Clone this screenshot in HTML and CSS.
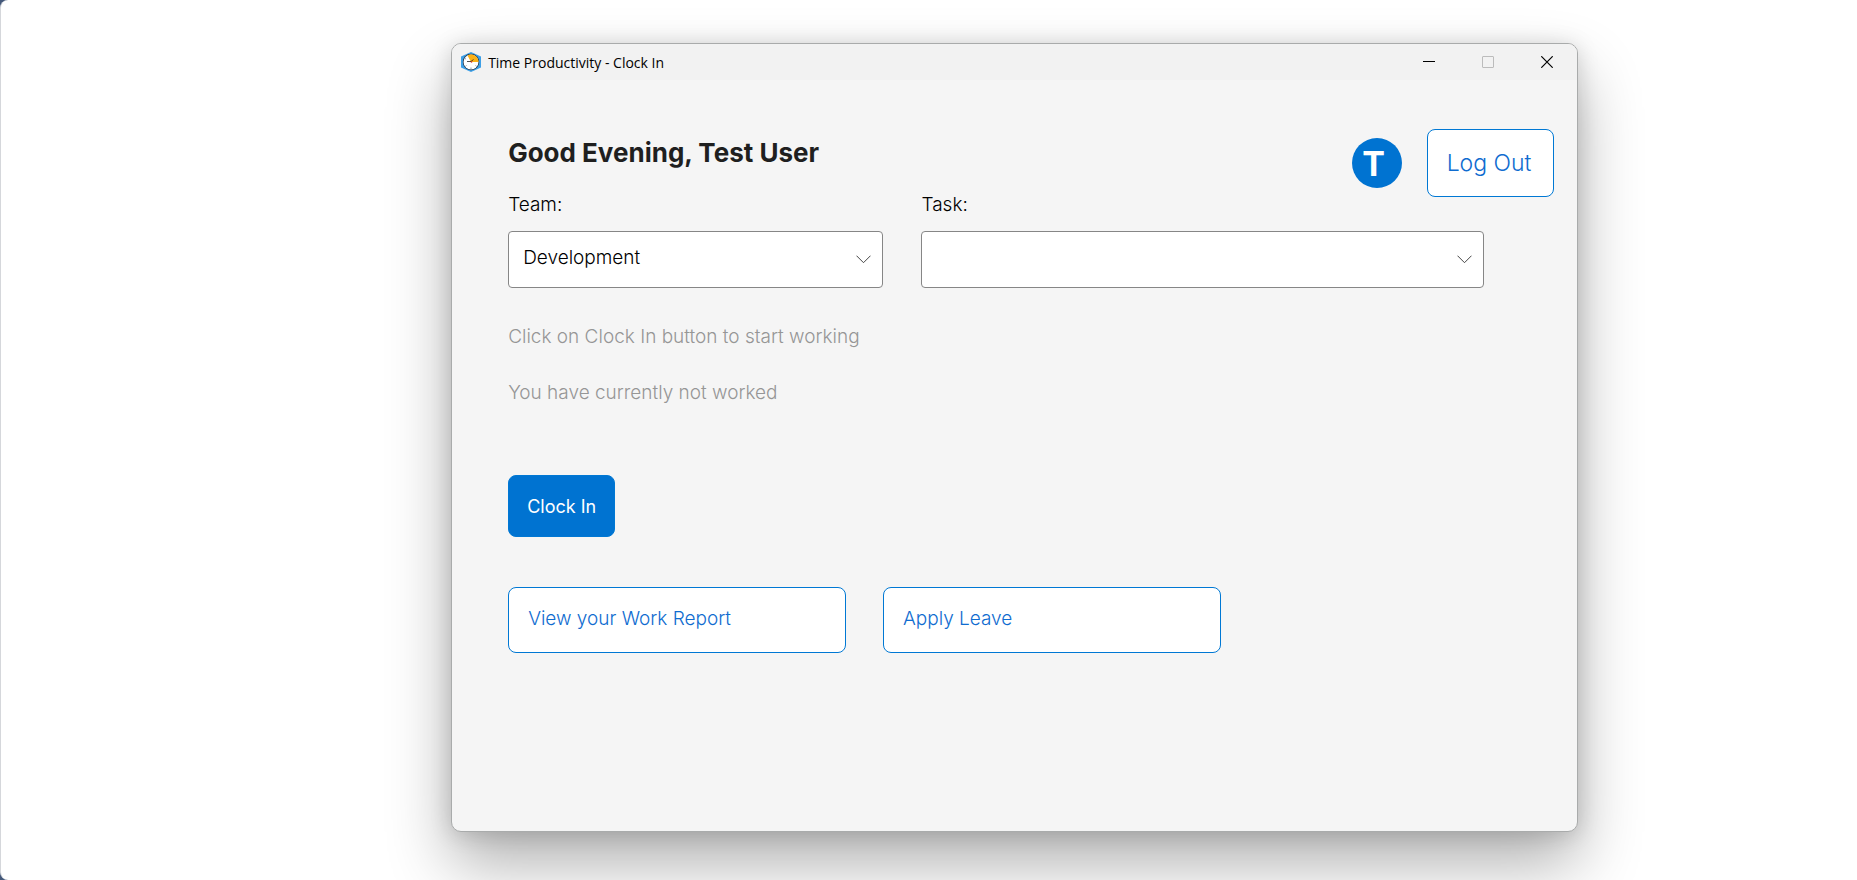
FILE: index.html
```html
<!DOCTYPE html>
<html lang="en">
<head>
<meta charset="utf-8">
<meta name="viewport" content="width=device-width, initial-scale=1">
<title>Time Productivity - Clock In</title>
<link rel="stylesheet" href="styles.css">
</head>
<body>
<div class="desktop">
  <main class="window">
    <header class="titlebar">
      <svg class="app-icon" viewBox="0 0 20 20" aria-hidden="true">
        <path fill="#3d9fe6" d="M10 0l10 4.500v11L10 20 0 15.500v-11z"/>
        <circle cx="10" cy="10" r="8.200" fill="#1d2a3a"/>
        <circle cx="10" cy="10" r="7.500" fill="#fff"/>
        <path fill="#fbb116" d="M10 10L6.500 3.400A7.500 7.500 0 0 1 17.500 10z"/>
        <path stroke="#222" stroke-width=".8" fill="none" d="M6 9.500h4l2.500-2"/>
        <path stroke="#8b98a5" stroke-width="1" d="M10 15.500v1.500M5.500 13.500l-1 .8M14.500 13.500l1 .8M4 6.500l1 .6"/>
        <circle cx="10.500" cy="10" r=".8" fill="#d33"/>
      </svg>
      <span class="titlebar-text">Time Productivity - Clock In</span>
      <div class="window-controls">
        <button class="control" type="button" aria-label="Minimize">
          <svg viewBox="0 0 12 12"><path d="M0 5.500h12" stroke="#000"/></svg>
        </button>
        <button class="control" type="button" aria-label="Maximize" disabled>
          <svg viewBox="0 0 12 12"><rect x=".5" y=".5" width="11" height="11" rx=".5" fill="none" stroke="#bcbcbc"/></svg>
        </button>
        <button class="control" type="button" aria-label="Close">
          <svg viewBox="0 0 12 12"><path d="M.3.3l11.400 11.400M11.700.3L.3 11.700" stroke="#000" stroke-width="1.200"/></svg>
        </button>
      </div>
    </header>

    <div class="content">
      <div class="top">
        <h1 class="greeting">Good Evening, Test User</h1>
        <div class="account">
          <span class="avatar">T</span>
          <button class="button button-logout" type="button">Log Out</button>
        </div>
      </div>

      <form class="panel">
        <div class="fields">
          <div class="field">
            <label class="label" for="team">Team:</label>
            <div class="select-wrap">
              <select class="select" id="team"><option>Development</option></select>
              <svg class="chevron" viewBox="0 0 15 9" aria-hidden="true"><path d="M.5.700l7 7 7-7"/></svg>
            </div>
          </div>
          <div class="field">
            <label class="label" for="task">Task:</label>
            <div class="select-wrap">
              <select class="select" id="task"><option></option></select>
              <svg class="chevron" viewBox="0 0 15 9" aria-hidden="true"><path d="M.5.700l7 7 7-7"/></svg>
            </div>
          </div>
        </div>

        <p class="hint">Click on Clock In button to start working</p>
        <p class="hint">You have currently not worked</p>

        <button class="button button-primary" type="button">Clock In</button>

        <div class="links">
          <button class="button button-link" type="button">View your Work Report</button>
          <button class="button button-link" type="button">Apply Leave</button>
        </div>
      </form>
    </div>
  </main>
</div>
</body>
</html>
```
FILE: styles.css
```css
* {
  box-sizing: border-box;
}

html {
  background: #44587a;
}

body {
  margin: 0;
  font-family: Inter, "Liberation Sans", sans-serif;
  color: #000;
}

button,
select {
  font: inherit;
}

.desktop {
  display: flex;
  min-height: 100vh;
  padding: 43px 15% 48px 24.24%;
  border-left: 1px solid #d5d7db;
  border-radius: 8px 0 0 8px;
  background: #fff;
  overflow: hidden;
}

.window {
  flex: 1;
  min-width: 0;
  border: 1px solid #a9abab;
  border-radius: 10px;
  background: #f5f5f5;
  box-shadow: 0 32px 64px rgba(0, 0, 0, 0.31), 0 2px 21px rgba(0, 0, 0, 0.15);
}

.titlebar {
  display: flex;
  align-items: center;
  height: 36px;
  padding-left: 9px;
  border-radius: 9px 9px 0 0;
  background: #f2f2f2;
}

.app-icon {
  width: 20px;
  height: 20px;
  margin-right: 7px;
}

.titlebar-text {
  font-family: "Open Sans", "Noto Sans", sans-serif;
  font-size: 14px;
}

.window-controls {
  display: flex;
  margin-left: auto;
  margin-right: 1px;
}

.control {
  display: grid;
  place-items: center;
  width: 59px;
  height: 36px;
  padding: 0;
  border: 0;
  background: none;
}

.control svg {
  width: 12px;
  height: 12px;
}

.content {
  padding: 49px 23px 48px 56px;
}

.top {
  display: flex;
  justify-content: space-between;
  align-items: flex-start;
}

.greeting {
  margin: 8px 0 0;
  font-size: 26px;
  line-height: 32px;
  font-weight: 700;
  color: #1f1f1f;
}

.account {
  display: flex;
  align-items: center;
  gap: 25px;
  margin-bottom: -4px;
}

.avatar {
  display: grid;
  place-items: center;
  width: 50px;
  height: 50px;
  padding-right: 6px;
  border-radius: 50%;
  background: #0073d1;
  color: #fff;
  font-size: 34px;
  font-weight: 700;
}

.button {
  border: 1px solid #0078d4;
  border-radius: 8px;
  background: #fff;
  color: #0f6cd0;
}

.button-logout {
  height: 68px;
  padding: 0 22px 0 19px;
  font-size: 23px;
  font-weight: 300;
}

.panel {
  margin-right: 70px;
}

.fields {
  display: grid;
  grid-template-columns: 2fr 3fr;
  gap: 38px;
  margin-bottom: 36px;
}

.label {
  display: block;
  margin-bottom: 14px;
  font-size: 19px;
  line-height: 24px;
  font-weight: 300;
}

.select-wrap {
  position: relative;
}

.select {
  display: block;
  width: 100%;
  height: 57px;
  padding: 0 40px 4px 14px;
  border: 1px solid #868686;
  border-radius: 4px;
  appearance: none;
  background: #fff;
  color: #000;
  font-size: 19px;
  font-weight: 300;
}

.chevron {
  position: absolute;
  top: 24px;
  right: 12px;
  width: 15px;
  height: 9px;
  fill: none;
  stroke: #444;
  pointer-events: none;
}

.hint {
  margin: 0 0 32px;
  font-size: 19px;
  line-height: 24px;
  font-weight: 300;
  color: #969696;
}

.fields + .hint {
  margin-top: 37px;
}

.button-primary {
  height: 62px;
  margin-top: 38px;
  padding: 0 18px;
  background: #0073d1;
  color: #fff;
  font-size: 18px;
}

.links {
  display: grid;
  grid-template-columns: 1fr 1fr;
  gap: 37px;
  width: 73%;
  margin-top: 50px;
}

.button-link {
  height: 66px;
  padding: 0 19px 4px;
  font-size: 19px;
  font-weight: 300;
  text-align: left;
}
```
